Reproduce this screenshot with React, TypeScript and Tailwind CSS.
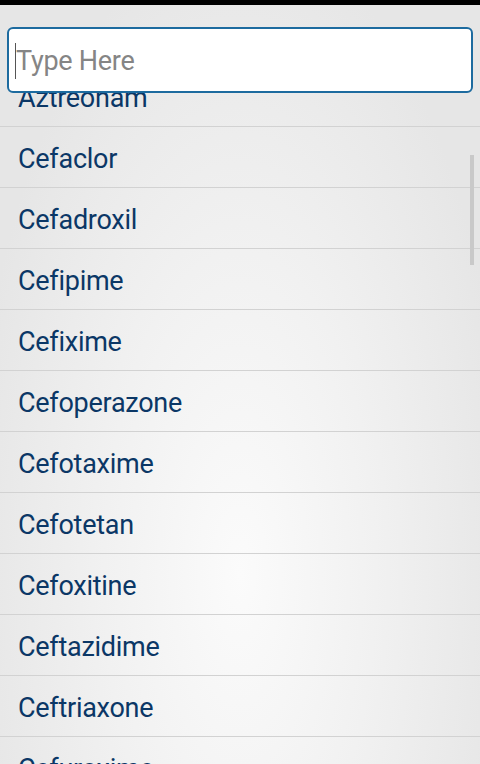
const drugs = [
  "Aztreonam",
  "Cefaclor",
  "Cefadroxil",
  "Cefipime",
  "Cefixime",
  "Cefoperazone",
  "Cefotaxime",
  "Cefotetan",
  "Cefoxitine",
  "Ceftazidime",
  "Ceftriaxone",
  "Cefuroxime",
];

export default function App() {
  return (
    <div
      className="w-[480px] h-[764px] overflow-hidden flex flex-col"
      style={{ fontFamily: "Roboto, 'Liberation Sans', sans-serif" }}
    >
      <div className="h-[5px] bg-black shrink-0" />
      <div className="relative flex-1 overflow-hidden bg-[radial-gradient(ellipse_at_50%_75%,#fbfbfb_0%,#f1f1f1_40%,#e6e6e6_80%)]">
        {/* list, scrolled so the first row sits under the search box */}
        <div className="pt-[61px]">
          {drugs.map((name) => (
            <div
              key={name}
              className="h-[61px] flex items-center pl-[18px] pt-[5px] border-b border-[#d2d2d2] text-[27px] tracking-[-0.01em] text-[#0b3766]"
            >
              {name}
            </div>
          ))}
        </div>

        {/* scrollbar */}
        <div className="absolute left-[470px] top-[150px] w-[4px] h-[110px] bg-[#c9c9c9]" />

        {/* search box overlay */}
        <div className="absolute left-[7px] top-[22px] w-[466px] h-[66px] bg-white border-2 border-[#1d6b9f] rounded-[6px] flex items-center pl-[6px] pt-[2px]">
          <div className="w-[1px] h-[36px] bg-[#555]" />
          <span className="text-[27px] tracking-[-0.01em] text-[#858585]">Type Here</span>
        </div>
      </div>
    </div>
  );
}
